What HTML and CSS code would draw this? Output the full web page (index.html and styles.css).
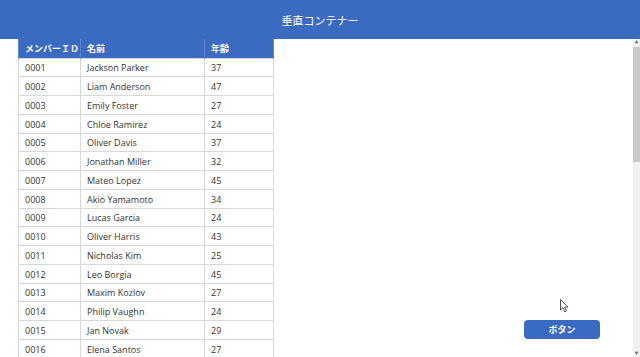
FILE: index.html
```html
<!DOCTYPE html>
<html lang="ja">
<head>
<meta charset="utf-8">
<title>垂直コンテナー</title>
<link rel="stylesheet" href="styles.css">
</head>
<body>
<header class="topbar"><h1 class="title">垂直コンテナー</h1></header>
<main class="main">
  <section class="table-area">
    <table class="members">
      <thead>
        <tr><th class="c-id">メンバーＩＤ</th><th class="c-name">名前</th><th class="c-age">年齢</th></tr>
      </thead>
      <tbody>
        <tr><td>0001</td><td>Jackson Parker</td><td>37</td></tr>
        <tr><td>0002</td><td>Liam Anderson</td><td>47</td></tr>
        <tr><td>0003</td><td>Emily Foster</td><td>27</td></tr>
        <tr><td>0004</td><td>Chloe Ramirez</td><td>24</td></tr>
        <tr><td>0005</td><td>Oliver Davis</td><td>37</td></tr>
        <tr><td>0006</td><td>Jonathan Miller</td><td>32</td></tr>
        <tr><td>0007</td><td>Mateo Lopez</td><td>45</td></tr>
        <tr><td>0008</td><td>Akio Yamamoto</td><td>34</td></tr>
        <tr><td>0009</td><td>Lucas Garcia</td><td>24</td></tr>
        <tr><td>0010</td><td>Oliver Harris</td><td>43</td></tr>
        <tr><td>0011</td><td>Nicholas Kim</td><td>25</td></tr>
        <tr><td>0012</td><td>Leo Borgia</td><td>45</td></tr>
        <tr><td>0013</td><td>Maxim Kozlov</td><td>27</td></tr>
        <tr><td>0014</td><td>Philip Vaughn</td><td>24</td></tr>
        <tr><td>0015</td><td>Jan Novak</td><td>29</td></tr>
        <tr><td>0016</td><td>Elena Santos</td><td>27</td></tr>
      </tbody>
    </table>
  </section>
  <section class="side">
    <button class="btn" type="button">ボタン</button>
    <svg class="cursor" width="10" height="14" viewBox="0 0 10 14"><path d="M0.5 0.5 L0.5 11 L3 8.6 L4.8 12.8 L6.4 12.1 L4.7 8.1 L8 8.1 Z" fill="#fff" stroke="#555" stroke-width="1"/></svg>
  </section>
  <div class="scrollbar">
    <div class="sb-arrow">▲</div>
    <div class="sb-track"><div class="sb-thumb"></div></div>
    <div class="sb-arrow">▼</div>
  </div>
</main>
</body>
</html>
```
FILE: styles.css
```css
html, body {
  margin: 0;
  padding: 0;
  height: 100%;
  overflow: hidden;
  background: #fff;
  font-family: "Open Sans", "Noto Sans CJK JP", sans-serif;
}
.topbar {
  height: 39px;
  background: #3a6bc0;
  display: flex;
  align-items: center;
  justify-content: center;
}
.title {
  margin: 0;
  color: #fff;
  font-family: "Noto Sans CJK JP", sans-serif;
  font-weight: 400;
  font-size: 11px;
}
.main {
  display: flex;
  height: 318px;
  overflow: hidden;
}
.table-area {
  padding-left: 18px;
  width: 254px;
  flex: none;
}
.members {
  border-collapse: collapse;
  width: 255px;
  table-layout: fixed;
  font-size: 9px;
  color: #333;
}
.members th {
  background: #3a6bc0;
  color: #fff;
  font-family: "Noto Sans CJK JP", sans-serif;
  font-weight: 700;
  font-size: 9px;
  text-align: left;
  height: 19px;
  padding: 0 0 0 6px;
  border-left: 1px solid #5a86cf;
  border-right: 1px solid #5a86cf;
  box-sizing: border-box;
}
.c-id { width: 62px; }
.c-name { width: 124px; }
.c-age { width: 69px; }
.members td {
  height: 18.75px;
  padding: 1px 0 0 6px;
  border: 1px solid #d8d8d8;
  box-sizing: border-box;
  white-space: nowrap;
  overflow: hidden;
}
.side {
  flex: 1;
  position: relative;
  display: flex;
  flex-direction: column;
  justify-content: flex-end;
  align-items: flex-end;
  padding: 0 33px 18px 0;
}
.btn {
  width: 76px;
  height: 19px;
  border: none;
  border-radius: 4px;
  background: #3a6bc4;
  color: #fff;
  font-family: "Noto Sans CJK JP", sans-serif;
  font-weight: 700;
  font-size: 9px;
  padding: 0;
}
.cursor {
  position: absolute;
  left: 288px;
  top: 260px;
}
.scrollbar {
  width: 7px;
  flex: none;
  display: flex;
  flex-direction: column;
  background: #f1f1f1;
}
.sb-arrow {
  height: 7px;
  font-size: 4px;
  line-height: 7px;
  text-align: center;
  color: #777;
}
.sb-track {
  flex: 1;
}
.sb-thumb {
  height: 115px;
  margin-top: 1px;
  background: #c8c8c8;
}
```
